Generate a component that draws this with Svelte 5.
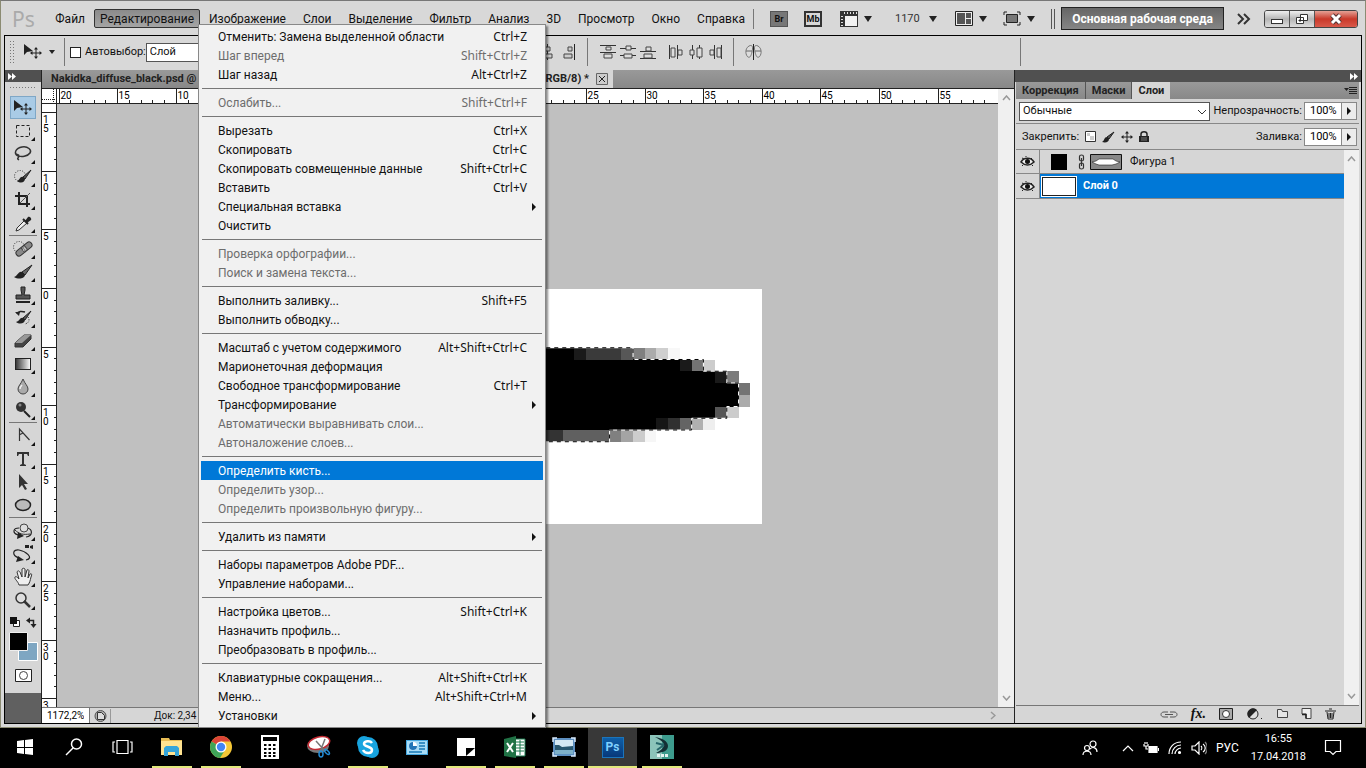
<script lang="ts">
	type MenuEntry = { text: string; keys?: string; off?: boolean; sub?: boolean; active?: boolean };

	const menusBefore = ['Файл'];
	const menusAfter = ['Изображение', 'Слои', 'Выделение', 'Фильтр', 'Анализ', '3D', 'Просмотр', 'Окно', 'Справка'];

	const editMenu: MenuEntry[][] = [
		[
			{ text: 'Отменить: Замена выделенной области', keys: 'Ctrl+Z' },
			{ text: 'Шаг вперед', keys: 'Shift+Ctrl+Z', off: true },
			{ text: 'Шаг назад', keys: 'Alt+Ctrl+Z' }
		],
		[{ text: 'Ослабить...', keys: 'Shift+Ctrl+F', off: true }],
		[
			{ text: 'Вырезать', keys: 'Ctrl+X' },
			{ text: 'Скопировать', keys: 'Ctrl+C' },
			{ text: 'Скопировать совмещенные данные', keys: 'Shift+Ctrl+C' },
			{ text: 'Вставить', keys: 'Ctrl+V' },
			{ text: 'Специальная вставка', sub: true },
			{ text: 'Очистить' }
		],
		[
			{ text: 'Проверка орфографии...', off: true },
			{ text: 'Поиск и замена текста...', off: true }
		],
		[{ text: 'Выполнить заливку...', keys: 'Shift+F5' }, { text: 'Выполнить обводку...' }],
		[
			{ text: 'Масштаб с учетом содержимого', keys: 'Alt+Shift+Ctrl+C' },
			{ text: 'Марионеточная деформация' },
			{ text: 'Свободное трансформирование', keys: 'Ctrl+T' },
			{ text: 'Трансформирование', sub: true },
			{ text: 'Автоматически выравнивать слои...', off: true },
			{ text: 'Автоналожение слоев...', off: true }
		],
		[
			{ text: 'Определить кисть...', active: true },
			{ text: 'Определить узор...', off: true },
			{ text: 'Определить произвольную фигуру...', off: true }
		],
		[{ text: 'Удалить из памяти', sub: true }],
		[{ text: 'Наборы параметров Adobe PDF...' }, { text: 'Управление наборами...' }],
		[
			{ text: 'Настройка цветов...', keys: 'Shift+Ctrl+K' },
			{ text: 'Назначить профиль...' },
			{ text: 'Преобразовать в профиль...' }
		],
		[
			{ text: 'Клавиатурные сокращения...', keys: 'Alt+Shift+Ctrl+K' },
			{ text: 'Меню...', keys: 'Alt+Shift+Ctrl+M' },
			{ text: 'Установки', sub: true }
		]
	];

	const moveArt =
		'<path d="M2 2v11l3-3 6-1z" fill="#222"/><path d="M14 6v10M9 11h10" stroke="#222" fill="none"/><path d="M14 5l-2 2.500h4zM14 17l-2-2.500h4zM8 11l2.500-2v4zM20 11l-2.500-2v4z" fill="#222"/>';

	// 22x20 drawings, grouped the way the palette is divided
	const toolGroups = [
		[
			{ name: 'Перемещение', art: moveArt, on: true },
			{ name: 'Прямоугольная область', art: '<rect x="4.500" y="4.500" width="13" height="11" fill="none" stroke="#222" stroke-dasharray="3 2"/>' },
			{ name: 'Лассо', art: '<path d="M6 12C1 9 4 4 10 3s10 3 8 6-9 5-13 2c-2-1 2-1 2 1s-3 2 0 4" fill="none" stroke="#333" stroke-width="1.500"/>' },
			{ name: 'Быстрое выделение', art: '<circle cx="8" cy="9" r="5.500" fill="none" stroke="#333" stroke-dasharray="1 1.500"/><path d="M19 3l-8 7 2 2z" fill="#555" stroke="#222"/><path d="M11 10c-3-1-3 3-6 4 4 3 8 1 8-2z" fill="#222"/>' },
			{ name: 'Рамка', art: '<path d="M7 2v12h11M3 6h12v11" fill="none" stroke="#222" stroke-width="2"/><path d="M8 13L18 3" stroke="#555"/>' },
			{ name: 'Пипетка', art: '<path d="M12 8l-7 7-1 3 3-1 8-7" fill="#eee" stroke="#333"/><path d="M11 6l5 5" stroke="#222" stroke-width="2"/><path d="M13 8l3-4c1-1 4 1 3 3l-4 3z" fill="#222"/>' }
		],
		[
			{ name: 'Восстанавливающая кисть', art: '<circle cx="7" cy="8" r="5.500" fill="none" stroke="#333" stroke-dasharray="1 1.500"/><path d="M7 14L17 6" stroke="#333" stroke-width="7" stroke-linecap="round"/><path d="M7 14L17 6" stroke="#888" stroke-width="5" stroke-linecap="round"/><path d="M9 9l4 5M12 6l4 5" stroke="#444"/><path d="M11 11h1M13 10h1M12 9h1" stroke="#eee"/>' },
			{ name: 'Кисть', art: '<path d="M20 3L10 10l3 3z" fill="#666" stroke="#222"/><path d="M10 10c-4-1-4 4-8 5 5 3 11 1 11-2z" fill="#222"/>' },
			{ name: 'Штамп', art: '<path d="M9 2h4v3l-1 5h6v4H4v-4h6L9 5z" fill="#555" stroke="#222"/><path d="M4 17h14" stroke="#222" stroke-width="2"/>' },
			{ name: 'Архивная кисть', art: '<path d="M19 3l-8 7 2 2z" fill="#555" stroke="#222"/><path d="M11 10c-3-1-3 3-7 4 4 3 9 1 9-2z" fill="#222"/><path d="M5 6c1-3 5-3 8-2" fill="none" stroke="#222" stroke-width="1.500"/><path d="M3 4l4 4 1-4z" fill="#222"/><path d="M16 9c2 3 1 6-3 7" fill="none" stroke="#222" stroke-dasharray="1 1.500"/>' },
			{ name: 'Ластик', art: '<path d="M3 12L12 4h7v4l-8 8H3z" fill="#444" stroke="#333"/><path d="M3 12L12 4h7l-9 8z" fill="#999"/>' },
			{ name: 'Градиент', art: '<defs><linearGradient id="toolGrad"><stop stop-color="#333"/><stop offset="1" stop-color="#fff"/></linearGradient></defs><rect x="3.500" y="4.500" width="15" height="11" fill="url(#toolGrad)" stroke="#222"/>' },
			{ name: 'Размытие', art: '<path d="M11 2c2 5 5 7 5 10a5 5 0 0 1-10 0c0-3 3-5 5-10z" fill="#aaa" stroke="#444"/><path d="M8 12c0-2 1-3 2-4" stroke="#eee" fill="none" stroke-width="1.500"/>' },
			{ name: 'Осветлитель', art: '<path d="M12 11l6 6" stroke="#222" stroke-width="2"/><circle cx="9" cy="7" r="5" fill="#333"/><circle cx="8" cy="5" r="1.500" fill="#888"/>' }
		],
		[
			{ name: 'Перо', art: '<path d="M7.500 15V3l10 11M7 9l4-2" fill="none" stroke="#333" stroke-width="1.200"/>' },
			{ name: 'Текст', art: '<path d="M5 3h12v4h-1l-1-2h-3v10l2 1v1H8v-1l2-1V5H7L6 7H5z" fill="#333"/>' },
			{ name: 'Выделение контура', art: '<path d="M7 2v14l3-3 3 5 2-1-3-5h4z" fill="#333"/>' },
			{ name: 'Эллипс', art: '<ellipse cx="11" cy="10" rx="7.500" ry="5.500" fill="#bbb" stroke="#222" stroke-width="1.500"/>' }
		],
		[
			{ name: 'Поворот 3D-объекта', art: '<path d="M7 7C1 7 0 12 6 14M15 7c6 1 6 8-1 9" fill="none" stroke="#222" stroke-width="1.200"/><path d="M6 11l6 4-7 3z" fill="#222"/><path d="M3 9c4 4 8 5 15 4" fill="none" stroke="#333"/><circle cx="12" cy="7" r="4" fill="#ddd" stroke="#444"/>' },
			{ name: 'Поворот 3D-камеры', art: '<path d="M7 14C-1 11 1 5 7 6s16 8 7 10" fill="none" stroke="#222" stroke-width="1.200"/><path d="M6 12l6 4-8 2z" fill="#222"/><path d="M13 1h4v3h-4zM18 2l3-1v4l-3-1z" fill="#222"/>' },
			{ name: 'Рука', art: '<path d="M7 18c-1-4-5-6-4-8 1-1 2 0 4 2L5 5c1-2 2-1 3 0l2 5V2c1-1 2-1 3 0v8l2-7c1-1 2 0 2 1l-1 7 2-4c2-1 2 1 1 3-1 4-1 5-3 8z" fill="#eee" stroke="#333"/>' },
			{ name: 'Масштаб', art: '<circle cx="9" cy="8" r="5" fill="#ddd" stroke="#333" stroke-width="1.500"/><path d="M12 11l6 6" stroke="#333" stroke-width="2.500"/>' }
		]
	];

	// align and distribute buttons, 16x16
	const distributeV = [
		'<path d="M0 1.500h16M0 8.500h16" stroke="#333"/><path d="M6 3h5v3H6zM4 10h8v4H4z" fill="#ddd" stroke="#444"/>',
		'<path d="M0 4.500h16M0 11.500h16" stroke="#333"/><path d="M6 2h5v4H6zM4 10h8v4H4z" fill="#ddd" stroke="#444"/>',
		'<path d="M0 7.500h16M0 14.500h16" stroke="#333"/><path d="M6 3h5v4H6zM4 10h8v4H4z" fill="#ddd" stroke="#444"/>'
	];
	const distributeH = [
		'<path d="M1.500 1v14M9.500 1v14" stroke="#333"/><path d="M3 4h4v9H3zM10 6h4v5h-4z" fill="#ddd" stroke="#444"/>',
		'<path d="M4.500 1v14M11.500 1v14" stroke="#333"/><path d="M2 6h4v5H2zM9 4h5v9H9z" fill="#ddd" stroke="#444"/>',
		'<path d="M6.500 1v14M13.500 1v14" stroke="#333"/><path d="M2 6h4v5H2zM9 4h4v9H9z" fill="#ddd" stroke="#444"/>'
	];

	const unit = 11.72;
	const origin = { x: 236, y: 184 };
	const range = (from: number, to: number) => Array.from({ length: to - from + 1 }, (_, i) => from + i);
	const ticksH = range(-20, 59);
	const ticksV = range(-15, 35);

	// shades of the brush stroke: row, first column, columns, colour
	const cells: [number, number, number, string][] = [
		[5, 24, 1, '#1a1a1a'], [5, 25, 3, '#3a3a3a'], [5, 28, 1, '#575757'], [5, 29, 1, '#808080'],
		[5, 30, 1, '#ababab'], [5, 31, 1, '#cfcfcf'], [5, 32, 1, '#f8f8f8'],
		[6, 33, 1, '#1a1a1a'], [6, 34, 1, '#747474'], [6, 35, 1, '#cccccc'],
		[7, 36, 1, '#1a1a1a'], [7, 37, 1, '#7c7c7c'],
		[8, 38, 1, '#747474'], [9, 38, 1, '#ababab'],
		[10, 36, 1, '#565656'], [10, 37, 1, '#cccccc'],
		[11, 31, 1, '#161616'], [11, 32, 1, '#303030'], [11, 33, 1, '#646464'], [11, 34, 1, '#b0b0b0'], [11, 35, 1, '#eeeeee'],
		[12, 21, 2, '#333333'], [12, 23, 4, '#606060'], [12, 27, 1, '#808080'], [12, 28, 1, '#a4a4a4'],
		[12, 29, 1, '#cccccc'], [12, 30, 1, '#f6f6f6']
	];
	const outline = 'M10 5H29V6H35V7H37V8H38V10H37V11H34V12H27V13H10';

	const taskbarApps = [
		{ name: 'Пуск', art: '<path d="M4 6l7-1v7H4zM12 5l8-1v8h-8zM4 13h7v6l-7-1zM12 13h8v7l-8-1z" fill="#fff"/>' },
		{ name: 'Поиск', art: '<circle cx="14.500" cy="9" r="5" fill="none" stroke="#fff" stroke-width="1.500"/><path d="M11 13l-7 7" stroke="#fff" stroke-width="1.500"/>' },
		{ name: 'Представление задач', art: '<path d="M6 5.500h11v13H6zM4 7H2v10h2M19 7h2v10h-2" fill="none" stroke="#fff" stroke-width="1.200"/>' },
		{ name: 'Проводник', open: true, art: '<path d="M1 3h8l1 2h12v15H1z" fill="#e8bd55"/><path d="M1 6h21v14H1z" fill="#ffe391"/><path d="M4 21v-8l2-2h11l2 2v8h-4v-4H8v4z" fill="#35a5da"/>' },
		{ name: 'Chrome', open: true, art: '<circle cx="12" cy="12" r="11" fill="#f5c736"/><path d="M12 12L2.500 6.500A11 11 0 0 1 21.500 6.500H12z" fill="#db4437"/><path d="M12 12L2.500 6.500A11 11 0 0 0 11 23l5-8z" fill="#3fa458"/><circle cx="12" cy="12" r="5.500" fill="#fff"/><circle cx="12" cy="12" r="4.200" fill="#4285f4"/>' },
		{ name: 'Калькулятор', art: '<path d="M3 0h18v24H3z" fill="#fff"/><path d="M5 2h14v4H5z" fill="#000"/><path d="M6 10h12M6 14h12M6 18h12M6 21h12" stroke="#000" stroke-width="2" stroke-dasharray="2.500 2"/>' },
		{ name: 'Ножницы', art: '<ellipse cx="11" cy="11" rx="11" ry="7" fill="#777"/><ellipse cx="12" cy="8" rx="11" ry="6" fill="#fff" stroke="#c22a32" stroke-width="1.500" transform="rotate(-15 12 8)"/><path d="M9 6l9 10M18 4l-5 13" stroke="#777" stroke-width="1.500"/><ellipse cx="14" cy="19" rx="2" ry="3" fill="none" stroke="#238bd5" stroke-width="1.500"/><ellipse cx="20" cy="17" rx="1.500" ry="3" fill="none" stroke="#238bd5" stroke-width="1.500" transform="rotate(-45 20 17)"/>' },
		{ name: 'Skype', open: true, art: '<circle cx="8" cy="8" r="7" fill="#18a4df"/><circle cx="16" cy="16" r="7" fill="#18a4df"/><circle cx="12" cy="12" r="10" fill="#18a4df"/><path d="M16 8c-2-3-8-2-8 1s8 2 8 6-7 4-9 0" fill="none" stroke="#fff" stroke-width="2.500"/>' },
		{ name: 'Панель управления', art: '<rect x="1" y="5" width="22" height="15" fill="#45a7df"/><rect x="2" y="6" width="20" height="13" fill="#a7dcf7"/><circle cx="8" cy="11" r="4" fill="#fff"/><path d="M8 7a4 4 0 1 0 4 4H8z" fill="#2275b7"/><path d="M14 8h6M14 11h6M14 14h6M4 17h13" stroke="#1778b6" stroke-width="1.500"/>' },
		{ name: 'Записки', open: true, art: '<path d="M3 3h18v18H3z" fill="#fff"/><path d="M12 13h9l-9 8z" fill="#000"/>' },
		{ name: 'Excel', open: true, art: '<path d="M11 4h11v17H11z" fill="#fff" stroke="#19794c"/><path d="M13 7h8M13 10h8M13 13h8M13 16h8M17 5v15" stroke="#19794c"/><path d="M1 4l12-3v22L1 21z" fill="#207245"/><path d="M4 8l6 9M10 8l-6 9" stroke="#fff" stroke-width="2"/>' },
		{ name: 'Фотографии', open: true, art: '<path d="M1 3h22v18H1z" fill="#5d8fc0"/><path d="M3 5h18v8H3z" fill="#d5e9f4"/><path d="M3 10h4l3 2 11-1v5H3z" fill="#28576f"/><path d="M3 15h18v4H3z" fill="#7eb0c8"/><path d="M1 7V3h4M19 3h4v4M1 17v4h4M19 21h4v-4" fill="none" stroke="#d9ecff" stroke-width="1.500"/>' },
		{ name: 'Photoshop', open: true, on: true, word: 'Ps', art: '' },
		{ name: '3ds Max', open: true, art: '<rect width="24" height="24" fill="#8cc4ba"/><path d="M12 0h12v24H12z" fill="#3d9b8d"/><path d="M5 2c7 1 13 4 13 9s-6 7-12 7c5-3 8-5 8-8S10 5 5 2z" fill="#142f35"/><path d="M6 8l8 2M7 15l7-5" stroke="#27676b" stroke-width="2"/><path d="M7 20.500h11" stroke="#e4f4f1" stroke-width="3" stroke-dasharray="3 1"/>' }
	];

	let autoSelect = false;
	let opacity = '100%';
	let fill = '100%';
	let zoom = '1172,2%';
</script>

<div class="desktop">
	<div class="window">
		<header class="menubar">
			<span class="logo">Ps</span>
			<nav>
				{#each menusBefore as m}<button>{m}</button>{/each}
				<button class="opened">Редактирование</button>
				{#each menusAfter as m}<button>{m}</button>{/each}
			</nav>
			<div class="appbar">
				<i class="rule"></i>
				<button class="square dark">Br</button>
				<button class="square">Mb</button>
				<button class="withArrow" aria-label="Вспомогательные элементы">
					<svg width="18" height="16"><path d="M0 0h18v16H0z" fill="#333" /><path d="M5 5h12v10H5z" fill="#f2f2f2" /><path d="M4 2h13M2 5v10" stroke="#ddd" stroke-width="2" stroke-dasharray="1 2" /></svg>
					<b class="down"></b>
				</button>
				<button class="withArrow scale">1170 <b class="down"></b></button>
				<button class="withArrow" aria-label="Упорядочить документы">
					<svg width="18" height="16"><path d="M.5.5h17v14H.5z" fill="#eee" stroke="#222" /><path d="M2 2h8v11H2zM11 2h5v5h-5zM11 8h5v5h-5z" fill="#555" /></svg>
					<b class="down"></b>
				</button>
				<button class="withArrow last" aria-label="Режимы экрана">
					<svg width="18" height="16"><path d="M1 4V1h3M14 1h3v3M1 11v3h3M14 14h3v-3" fill="none" stroke="#222" /><path d="M3.500 3.500h11v8h-11z" fill="#777" stroke="#222" /></svg>
					<b class="down"></b>
				</button>
				<i class="double"></i>
				<button class="workspace">Основная рабочая среда</button>
				<button class="more" aria-label="Другие среды">
					<svg width="14" height="12"><path d="M1 1l5 5-5 5M7 1l5 5-5 5" fill="none" stroke="#333" stroke-width="2" /></svg>
				</button>
				<div class="winButtons">
					<button aria-label="Свернуть"><svg width="14" height="12"><rect x="1.500" y="6.500" width="11" height="4" fill="#fff" stroke="#333" /></svg></button>
					<button aria-label="Развернуть"><svg width="14" height="12"><path d="M5.500 1.500h7v6h-7zM1.500 4.500h7v6h-7z" fill="#fff" stroke="#333" /><path d="M4 7h2v1H4z" stroke="#333" /></svg></button>
					<button class="closeBtn" aria-label="Закрыть"><svg width="14" height="12"><path d="M3 2l8 8M11 2l-8 8" stroke="#533" stroke-width="5" /><path d="M3 2l8 8M11 2l-8 8" stroke="#fff" stroke-width="3" /></svg></button>
				</div>
			</div>
		</header>

		<div class="frame">
			<div class="options">
				<i class="grip tall"></i>
				<button class="current" aria-label="Перемещение"><svg width="22" height="20">{@html moveArt}</svg><b class="down small"></b></button>
				<i class="rule"></i>
				<label class="auto"><input type="checkbox" bind:checked={autoSelect} />Автовыбор:</label>
				<select aria-label="Автовыбор"><option>Слой</option></select>
				<div class="aligns">
					<svg width="16" height="16"><path d="M8.500 0v16" stroke="#333" /><path d="M6 3h5v4H6zM4 10h9v4H4z" fill="#ccc" stroke="#444" /></svg>
					<svg width="16" height="16"><path d="M14.500 0v16" stroke="#222" /><path d="M8 3h4v4H8zM4 10h8v4H4z" fill="#ccc" stroke="#444" /></svg>
				</div>
				<i class="rule"></i>
				<div class="distribute">
					{#each distributeV as art}<svg width="16" height="16">{@html art}</svg>{/each}
				</div>
				<div class="distribute">
					{#each distributeH as art}<svg width="16" height="16">{@html art}</svg>{/each}
				</div>
				<i class="rule"></i>
				<svg class="autoAlign" width="17" height="16"><path d="M4 2c4-2 4 2 3 6s-2 6-4 5-4-8 1-11zM13 2c-4-2-4 2-3 6s2 6 4 5 4-8-1-11z" fill="#ddd" stroke="#777" /><path d="M1 7h6M10 7h6" stroke="#666" /><path d="M8.500 0v16" stroke="#222" /></svg>
				<i class="rule end"></i>
			</div>

			<div class="work">
				<aside class="tools">
					<div class="collapse"><svg width="8" height="7"><path d="M0 0l4 3.500L0 7zM4 0l4 3.500L4 7z" fill="#fff" /></svg></div>
					<div class="palette">
						<i class="grip wide"></i>
						{#each toolGroups as group, g}
							{#if g}<hr />{/if}
							{#each group as tool}
								<button class="tool" class:on={tool.on} aria-label={tool.name}>
									<svg width="22" height="20">{@html tool.art}</svg>
								</button>
							{/each}
						{/each}
						<svg class="colors" width="32" height="50">
							<path d="M4.500 5.500h6v6h-6z" fill="#fff" stroke="#222" /><path d="M1 2h7v7H1z" fill="#111" />
							<path d="M20 5.500h4.500v5" fill="none" stroke="#222" stroke-width="1.500" /><path d="M17 5.500l4-3v6zM24.500 13l-3-4h6z" fill="#222" />
							<path d="M9.500 27.500h19v18h-19z" fill="#7ea6c2" stroke="#fff" />
							<path d="M.5 17.500h18v18H.5z" fill="#000" stroke="#eee" />
						</svg>
						<button class="mask" aria-label="Быстрая маска"><svg width="17" height="13"><path d="M.5.5h16v12H.5z" fill="#fff" stroke="#222" /><circle cx="8.500" cy="6.500" r="4" fill="#fff" stroke="#444" /></svg></button>
					</div>
				</aside>

				<section class="document">
					<div class="tabs">
						<div class="strip">
							<button class="docTab">Nakidka_diffuse_black.psd @</button>
							<button class="docTab front">RGB/8) *<svg width="12" height="12"><path d="M.5.5h11v11H.5z" fill="#ccc" stroke="#666" /><path d="M3 3l6 6M9 3l-6 6" stroke="#222" /></svg></button>
						</div>
					</div>
					<div class="view">
						<svg class="corner" width="15" height="15"><path d="M0 10.500h15M11.500 0v15" stroke="#222" stroke-dasharray="1 1" /></svg>
						<svg class="rulerH" width="100%" height="15">
							{#each ticksH as t}
								{@const x = Math.round(origin.x + t * unit) + 0.5}
								<path d="M{x} {t % 5 ? 11 : 0}V15" stroke="#222" />
								{#if t % 5 === 0}<text x={x + 1} y="10">{Math.abs(t)}</text>{/if}
							{/each}
						</svg>
						<svg class="rulerV" width="15" height="100%">
							{#each ticksV as t}
								{@const y = Math.round(origin.y + t * unit) + 0.5}
								<path d="M{t % 5 ? 12 : 0} {y}H15" stroke="#222" />
								{#if t % 5 === 0}
									{#each String(Math.abs(t)) as digit, n}<text x="1" y={y + 10 + n * 9}>{digit}</text>{/each}
								{/if}
							{/each}
						</svg>
						<div class="canvas">
							<svg class="artboard" width="469" height="235" viewBox="0 0 40 20" preserveAspectRatio="none" shape-rendering="crispEdges">
								<rect width="40" height="20" fill="#fff" />
								<path d="M10 5H24V6H33V7H36V8H38V10H36V11H31V12H21V13H10z" />
								{#each cells as [row, col, span, shade]}
									<rect x={col} y={row} width={span} height="1" fill={shade} />
								{/each}
								<path class="ants base" d={outline} />
								<path class="ants" d={outline} />
							</svg>
						</div>
					</div>
					<div class="scroll">
						<svg width="9" height="6"><path d="M1 5l3.500-4L8 5" /></svg>
						<svg width="9" height="6"><path d="M1 1l3.500 4L8 1" /></svg>
					</div>
					<footer class="status">
						<input class="zoom" aria-label="Масштаб" bind:value={zoom} />
						<svg class="sheet" width="21" height="14"><circle cx="10.500" cy="7" r="5.500" fill="#aaa" stroke="#555" /><path d="M7.500 3.500h4l3 3v4h-7z" fill="#ddd" stroke="#333" /></svg>
						<span>Док: 2,34</span>
						<svg class="right" width="6" height="9"><path d="M1 1l4 3.500L1 8" /></svg>
					</footer>
				</section>

				<aside class="panels">
					<div class="collapse"><svg width="8" height="7"><path d="M0 0l4 3.500L0 7zM4 0l4 3.500L4 7z" fill="#fff" /></svg></div>
					<div class="panelTabs">
						<button>Коррекция</button>
						<button>Маски</button>
						<button class="front">Слои</button>
						<svg width="13" height="9"><path d="M0 2h5L2.500 5z" fill="#222" /><path d="M5 1.500h8M5 3.500h8M5 5.500h8M5 7.500h8" stroke="#222" /></svg>
					</div>
					<div class="row">
						<div class="blend">
							<select aria-label="Режим наложения"><option>Обычные</option></select>
							<svg width="10" height="6"><path d="M1 1l4 4 4-4" fill="none" stroke="#333" /></svg>
						</div>
						<label for="opacity">Непрозрачность:</label>
						<span class="percent"><input id="opacity" bind:value={opacity} /><button aria-label="Изменить непрозрачность"><b class="play"></b></button></span>
					</div>
					<div class="row lock">
						<span>Закрепить:</span>
						<svg width="11" height="11"><path d="M.5.5h10v10H.5z" fill="#fff" stroke="#333" /><path d="M2 2h3v3H2zM5 5h4v4H5z" fill="#ccc" /></svg>
						<svg width="13" height="12"><path d="M12 1L5 6l2 2z" fill="#555" stroke="#222" /><path d="M5 6c-3 0-2 3-5 5 4 1 7 0 7-3z" fill="#222" /></svg>
						<svg width="12" height="12"><path d="M6 1v10M1 6h10" stroke="#222" /><path d="M6 0L4 2.500h4zM6 12l-2-2.500h4zM0 6l2.500-2v4zM12 6L9.500 4v4z" fill="#222" /></svg>
						<svg width="10" height="11"><path d="M2 5V3c0-3 6-3 6 0v2" fill="none" stroke="#222" stroke-width="1.500" /><path d="M0 5h10v6H0z" fill="#222" /><path d="M2 7h6M2 9h6" stroke="#777" /></svg>
						<label class="fillLabel" for="fill">Заливка:</label>
						<span class="percent"><input id="fill" bind:value={fill} /><button aria-label="Изменить заливку"><b class="play"></b></button></span>
					</div>
					<div class="layers">
						<div class="list">
							{#each ['Фигура 1', 'Слой 0'] as layer, n}
								<div class="layer" class:chosen={n === 1}>
									<button class="eye" aria-label="Видимость">
										<svg width="15" height="11"><path d="M1 6c3-5 10-5 13 0-4 4-9 4-13 0z" fill="#eee" stroke="#222" stroke-width="1.500" /><circle cx="7.500" cy="5.500" r="2.500" fill="#111" /><path d="M2 2l2 1M6 0v1M12 2l-1 1M3 9l-1 1M12 9l1 1" stroke="#222" /></svg>
									</button>
									{#if n === 0}
										<svg width="72" height="18">
											<path d="M0 1h16v16H0z" />
											<path d="M28.500 3.500c0-2 4-2 4 0v3c0 2-4 2-4 0zM28.500 11.500c0-2 4-2 4 0v3c0 2-4 2-4 0zM30.500 5v8" fill="none" stroke="#333" stroke-width="1.200" />
											<path d="M39.500 1.500h31v15h-31z" fill="#888" stroke="#111" />
											<path d="M41 9l4-1 3-2h14l3 2 4 1-4 2-4 1H48l-3-1z" fill="#fff" stroke="#222" stroke-width=".6" />
										</svg>
									{:else}
										<i class="thumb"></i>
									{/if}
									<span>{layer}</span>
								</div>
							{/each}
						</div>
						<div class="scroll">
							<svg width="9" height="6"><path d="M1 5l3.500-4L8 5" /></svg>
							<svg width="9" height="6"><path d="M1 1l3.500 4L8 1" /></svg>
						</div>
					</div>
					<footer class="layerBar">
						<svg width="18" height="10"><path d="M8 3H4C0 3 0 8 4 8h4M10 3h4c4 0 4 5 0 5h-4M5 5.500h8" fill="none" stroke="#555" /></svg>
						<em>fx<i>.</i></em>
						<svg width="15" height="12"><path d="M.5.5h13v11H.5z" fill="#aaa" stroke="#222" /><circle cx="7" cy="6" r="3.500" fill="#fff" stroke="#333" /></svg>
						<svg width="16" height="12"><circle cx="6" cy="6" r="5" fill="#ddd" stroke="#222" /><path d="M2 10A5.500 5.500 0 0 1 10 2z" fill="#222" /><path d="M14 10h1v1h-1z" fill="#222" /></svg>
						<svg width="12" height="11"><path d="M1.500 9.500v-8h4l1 2h5v6z" fill="#e5e5e5" stroke="#444" /></svg>
						<svg width="11" height="11"><path d="M1 .5h9v10H5V6H1z" fill="#eee" stroke="#444" /><path d="M1 6.500h4v4" fill="none" stroke="#222" stroke-width="1.500" /></svg>
						<svg width="11" height="12"><path d="M0 3h11M4 1h3M2 4l1 7h5l1-7M4 5v5M5.500 5v5M7 5v5" fill="none" stroke="#222" /></svg>
					</footer>
				</aside>
			</div>
		</div>

		<div class="dropdown" role="menu">
			{#each editMenu as group, g}
				{#if g}<hr />{/if}
				{#each group as item}
					<button role="menuitem" class:active={item.active} class:off={item.off}>
						<span>{item.text}</span>
						{#if item.keys}<kbd>{item.keys}</kbd>{/if}
						{#if item.sub}<b class="play"></b>{/if}
					</button>
				{/each}
			{/each}
		</div>
	</div>

	<footer class="taskbar">
		{#each taskbarApps as app}
			<button class="app" class:open={app.open} class:on={app.on} aria-label={app.name}>
				{#if app.word}<span class="psIcon">{app.word}</span>{:else}<svg width="24" height="24">{@html app.art}</svg>{/if}
			</button>
		{/each}
		<div class="tray">
			<svg class="people" width="16" height="16"><circle cx="11" cy="4" r="3" /><circle cx="5" cy="8" r="2.500" /><path d="M1 15c0-5 8-5 8 0M8 9c3-3 7-1 7 3" /></svg>
			<svg width="12" height="8"><path d="M1 7l5-5 5 5" /></svg>
			<svg width="16" height="12"><path class="solid" d="M6 4.500h8v6H6z" /><path d="M15.500 6v3M1 2v2h4V2M3 4v3h2M2 0v2M4 0v2" /></svg>
			<svg width="14" height="14"><path d="M1 13C1 6 6 1 13 1M4 13c0-5 4-9 9-9M7 13c0-3 3-6 6-6" /><circle class="solid" cx="11.500" cy="11.500" r="1" /></svg>
			<svg width="16" height="14"><path d="M1 5h3l4-4v12L4 9H1zM10 5c1 1 1 3 0 4M12 3c3 2 3 6 0 8" /><path d="M14 1c3 3 3 9 0 12" opacity=".5" /></svg>
			<span>РУС</span>
			<time>16:55<br />17.04.2018</time>
			<svg class="note" width="18" height="18"><path d="M1.500 1.500h15v11H12l-3 3-3-3H1.500z" /></svg>
		</div>
	</footer>
</div>

<style>
	:global(body) {
		margin: 0;
		background: #000;
	}
	.desktop {
		--ui: Roboto, 'Noto Sans', sans-serif;
		--wide: 'Noto Sans', 'Open Sans', sans-serif;
		display: flex;
		flex-direction: column;
		min-height: 100vh;
		font: 12px/18px var(--ui);
		color: #111;
	}
	.desktop :global(*) {
		box-sizing: border-box;
	}
	button {
		margin: 0;
		padding: 0;
		border: 0;
		background: none;
		color: inherit;
		font: inherit;
		white-space: nowrap;
	}
	svg {
		display: block;
		flex: none;
	}
	hr {
		margin: 0;
		border: 0;
	}
	.rule {
		width: 1px;
		align-self: stretch;
		background: #777;
	}
	.down {
		border: 4px solid transparent;
		border-top: 6px solid #222;
		border-bottom: 0;
	}
	.down.small {
		border-width: 4px 3px 0;
	}
	.play {
		border: 4px solid transparent;
		border-left: 4px solid #111;
		border-right: 0;
	}

	.window {
		position: relative;
		flex: 1;
		display: flex;
		flex-direction: column;
		padding: 0 3px 3px;
		border: 1px solid #8b8b72;
		border-top-color: #777;
		background: #d8d8d8;
	}
	.menubar {
		display: flex;
		align-items: center;
		height: 34px;
		padding-top: 1px;
	}
	.logo {
		width: 40px;
		margin-right: 8px;
		padding-left: 8px;
		color: #aaa;
		font: 21px/24px var(--wide);
	}
	.menubar nav {
		margin-left: -8px;
		padding-left: 8px;
	}
	nav {
		display: flex;
		gap: 1px;
	}
	nav button {
		height: 19px;
		padding: 0 8px;
	}
	nav .opened {
		padding: 0 5px;
		border: 1px solid #333;
		border-radius: 2px;
		background: linear-gradient(#8b8b8b, #a4a4a4);
		line-height: 16px;
	}
	.appbar {
		flex: 0 0 609px;
		display: flex;
		align-items: center;
		margin-left: auto;
	}
	.appbar .rule {
		height: 20px;
		align-self: center;
	}
	.square {
		height: 16px;
		width: 18px;
		margin-left: 16px;
		border: 2px solid #333;
		font: bold 9px/12px var(--ui);
	}
	.square.dark {
		border: 1px solid #555;
		background: #777;
		color: #111;
	}
	.withArrow {
		display: flex;
		align-items: center;
		gap: 6px;
		margin-left: 18px;
	}
	.scale {
		margin-left: 23px;
		gap: 9px;
		color: #333;
		font-size: 11px;
	}
	.last {
		margin-left: 16px;
	}
	.double {
		width: 4px;
		height: 20px;
		margin-left: auto;
		border: solid #555;
		border-width: 0 1px;
	}
	.workspace {
		height: 23px;
		margin-left: 6px;
		padding: 0 10px;
		border: 1px solid #222;
		background: linear-gradient(#666, #858585);
		color: #fff;
		font-weight: bold;
		line-height: 20px;
	}
	.more {
		margin: 0 13px;
	}
	.winButtons {
		display: flex;
		margin-right: 4px;
		border: 1px solid #444;
		border-radius: 3px;
		overflow: hidden;
	}
	.winButtons button {
		display: grid;
		place-items: center;
		width: 25px;
		height: 16px;
		border-right: 1px solid #555;
		background: linear-gradient(#eee, #b5b5b5 50%, #ddd);
	}
	.winButtons .closeBtn {
		width: 42px;
		border: 0;
		background: linear-gradient(#e5a195, #c9392a 50%, #d9594a);
	}

	.frame {
		flex: 1;
		display: flex;
		flex-direction: column;
		border: 1px solid #000;
	}
	.options {
		display: flex;
		align-items: center;
		height: 34px;
		padding: 2px 4px 4px;
		font: 11px/16px var(--ui);
	}
	.grip {
		background: radial-gradient(circle, #777 1px, transparent 1px) 0 0 / 3px 3px;
	}
	.tall {
		width: 5px;
		height: 24px;
	}
	.current {
		display: flex;
		align-items: center;
		gap: 5px;
		margin: 0 9px 0 8px;
	}
	.auto {
		display: flex;
		align-items: center;
		gap: 4px;
		margin-left: 5px;
	}
	.auto input {
		appearance: none;
		width: 11px;
		height: 11px;
		margin: 0;
		border: 1px solid #222;
		background: #fff;
	}
	select {
		appearance: none;
		height: 19px;
		padding: 0 3px;
		border: 1px solid #555;
		border-radius: 0;
		background: #fff;
		color: #111;
		font: 11px/16px var(--ui);
	}
	.options select {
		width: 90px;
	}
	.aligns {
		display: flex;
		gap: 5px;
		margin: 0 11px 0 auto;
	}
	.distribute {
		display: flex;
		gap: 4px;
		margin-left: 12px;
	}
	.distribute + .rule {
		margin-left: 9px;
	}
	.autoAlign {
		margin-left: 11px;
	}
	.options .end {
		margin: 0 336px 0 258px;
	}

	.work {
		flex: 1;
		display: flex;
	}
	.collapse {
		display: flex;
		align-items: center;
		height: 12px;
		padding: 0 3px;
		background: #505050;
	}
	.tools {
		width: 37px;
		border-right: 1px solid #222;
		background: #606060;
	}
	.palette {
		display: flex;
		flex-direction: column;
		align-items: center;
		padding: 4px 0;
		background: #d6d6d6;
	}
	.wide {
		width: 28px;
		height: 4px;
		margin-bottom: 6px;
	}
	.palette hr {
		width: 28px;
		height: 1px;
		margin: 1px 0;
		background: #777;
	}
	.tool {
		position: relative;
		display: grid;
		place-items: center;
		width: 26px;
		height: 23px;
	}
	.tool.on {
		border: 1px solid #7fa7c6;
		background: #a9cbe6;
	}
	.tool::after {
		content: '';
		position: absolute;
		right: 1px;
		bottom: 1px;
		border: 2px solid #111;
		border-left-color: transparent;
		border-top-color: transparent;
	}
	.tool.on::after {
		display: none;
	}
	.colors {
		margin: 4px 0 0 4px;
	}
	.mask {
		margin: 4px 0 7px;
	}

	.document {
		flex: 1;
		min-width: 0;
		display: grid;
		grid-template: 19px 1fr 16px / 1fr 16px;
		border-right: 1px solid #222;
		background: #d6d6d6;
	}
	.tabs {
		grid-column: 1 / 3;
		border-bottom: 1px solid #222;
		background: linear-gradient(#999, #888);
	}
	.strip {
		display: flex;
		justify-content: space-between;
		max-width: 571px;
	}
	.docTab {
		padding: 0 9px;
		color: #222;
		font: bold 11px/18px var(--ui);
	}
	.docTab.front {
		display: flex;
		align-items: center;
		gap: 7px;
		padding: 0 5px;
		background: #d6d6d6;
	}
	.view {
		display: grid;
		grid-template: 15px 1fr / 15px 1fr;
		min-height: 0;
		background: #fff;
	}
	.view > * {
		min-width: 0;
		overflow: hidden;
	}
	.corner,
	.rulerH {
		border-bottom: 1px solid #222;
	}
	.corner,
	.rulerV {
		border-right: 1px solid #222;
	}
	.rulerV {
		height: 100%;
		contain: size;
	}
	.view text {
		font: 10px var(--ui);
	}
	.canvas {
		position: relative;
		background: #c0c0c0;
	}
	.artboard {
		position: absolute;
		left: 236px;
		top: 185px;
	}
	.ants {
		fill: none;
		stroke: #000;
		stroke-width: 1px;
		stroke-dasharray: 4 4;
		vector-effect: non-scaling-stroke;
	}
	.base {
		stroke: #fff;
		stroke-dasharray: none;
	}
	.scroll {
		display: flex;
		flex-direction: column;
		align-items: center;
		justify-content: space-between;
		padding: 6px 0;
		background: #f0f0f0;
	}
	.scroll path,
	.right path {
		fill: none;
		stroke: #999;
		stroke-width: 1.5;
	}
	.status {
		grid-column: 1 / 3;
		display: flex;
		align-items: center;
		border-top: 1px solid #777;
		padding-right: 18px;
		font: 10px/14px var(--ui);
	}
	.zoom {
		width: 48px;
		height: 15px;
		padding: 0 5px;
		border: 0;
		border-right: 1px solid #777;
		background: #fff;
		font: inherit;
	}
	.sheet {
		border-right: 1px solid #999;
	}
	.status span {
		margin-left: 43px;
	}
	.right {
		margin-left: auto;
	}

	.panels {
		display: flex;
		flex-direction: column;
		width: 346px;
		padding: 0 2px 0 1px;
		background: #d6d6d6;
		font: 11px/16px var(--ui);
	}
	.panels .collapse {
		justify-content: flex-end;
		margin: 0 -2px 0 -1px;
	}
	.panelTabs {
		display: flex;
		height: 17px;
		background: linear-gradient(#999, #888);
		font: bold 11px/16px var(--ui);
	}
	.panelTabs button {
		padding: 0 6px;
		border-right: 1px solid #555;
		color: #222;
	}
	.panelTabs .front {
		background: #d6d6d6;
		border: 0;
	}
	.panelTabs svg {
		margin: 4px 2px 0 auto;
	}
	.row {
		display: flex;
		align-items: center;
		height: 25px;
		padding: 0 2px 0 3px;
		border-bottom: 1px solid #888;
	}
	.blend {
		position: relative;
		flex: 1;
		display: flex;
		margin-right: 3px;
	}
	.blend select {
		width: 100%;
	}
	.blend svg {
		position: absolute;
		right: 3px;
		top: 7px;
		pointer-events: none;
	}
	.percent {
		display: flex;
		width: 53px;
		height: 18px;
		margin-left: 2px;
		border: 1px solid #888;
	}
	.percent input {
		width: 36px;
		padding: 0 0 0 5px;
		border: 0;
		background: #fff;
		font: inherit;
	}
	.percent button {
		flex: 1;
		display: grid;
		place-items: center;
		border-left: 1px solid #888;
		background: #ececec;
	}
	.lock {
		gap: 6px;
		height: 26px;
		padding-left: 6px;
	}
	.lock .percent {
		margin-left: -4px;
	}
	.fillLabel {
		margin-left: auto;
	}
	.layers {
		flex: 1;
		display: flex;
		border-bottom: 1px solid #777;
	}
	.list {
		flex: 1;
	}
	.layers .scroll {
		width: 15px;
	}
	.layer {
		display: flex;
		align-items: center;
		height: 24px;
		border-bottom: 1px solid #888;
	}
	.layer > svg {
		margin: 0 7px 0 11px;
	}
	.eye {
		display: grid;
		place-items: center;
		width: 24px;
		height: 100%;
		border-right: 1px solid #888;
		background: #d6d6d6;
	}
	.chosen {
		height: 25px;
		background: #0078d7;
		color: #fff;
		font-weight: bold;
	}
	.thumb {
		width: 34px;
		height: 19px;
		margin: 0 7px 0 2px;
		border: 1px solid #222;
		outline: 1px solid #fff;
		background: #fff;
	}
	.layerBar {
		display: flex;
		align-items: center;
		justify-content: flex-end;
		gap: 13px;
		height: 17px;
		padding: 0 23px 2px 0;
	}
	.layerBar em {
		font: italic bold 14px/14px 'Liberation Serif', serif;
	}

	.dropdown {
		position: absolute;
		left: 197px;
		top: 23px;
		width: 348px;
		padding: 2px;
		border: 1px solid #888;
		background: #f1f1f1;
		box-shadow: 2px 2px 2px rgba(0, 0, 0, 0.45);
	}
	.dropdown button {
		display: flex;
		align-items: center;
		width: 100%;
		height: 19px;
		padding: 0 16px 0 17px;
	}
	.dropdown kbd {
		margin-left: auto;
		font: 12px/18px var(--wide);
	}
	.dropdown .play {
		margin: 0 -9px 0 auto;
	}
	.dropdown hr {
		height: 1px;
		margin: 4px 1px;
		background: #777;
	}
	.dropdown .off {
		color: #6d6d6d;
	}
	.dropdown .active {
		background: #0078d7;
		color: #fff;
	}

	.taskbar {
		display: flex;
		height: 40px;
		background: #000;
		color: #fff;
	}
	.app {
		display: grid;
		place-items: center;
		width: 49px;
		border-bottom: 2px solid transparent;
	}
	.app.open {
		background: linear-gradient(#e2e87c, #e2e87c) center bottom / 40px 2px no-repeat;
		background-origin: border-box;
		background-clip: border-box;
	}
	.app.on {
		border-color: #e2e87c;
		background: #383838;
	}
	.psIcon {
		width: 22px;
		height: 21px;
		border: 1px solid #1b75bb;
		background: linear-gradient(#0e5fa8, #07387a);
		color: #7fd0ff;
		font-weight: bold;
	}
	.tray {
		display: flex;
		align-items: center;
		margin-left: auto;
		gap: 9px;
		padding-right: 24px;
	}
	.tray path,
	.tray circle {
		fill: none;
		stroke: #fff;
		stroke-width: 1.2;
	}
	.tray .solid {
		fill: #fff;
	}
	.people {
		margin-right: 15px;
	}
	.tray time {
		margin-left: 3px;
		font-size: 11px;
		text-align: center;
	}
	.note {
		margin-left: 9px;
	}
</style>
